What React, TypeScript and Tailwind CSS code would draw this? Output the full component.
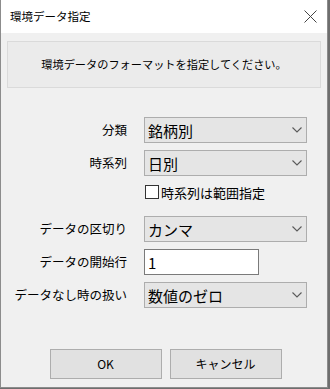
import React from "react";

const font = { fontFamily: '"Noto Sans CJK JP", "Noto Sans", sans-serif' };

function Chevron() {
  return (
    <svg width="10" height="6" viewBox="0 0 10 6" className="mr-[4px] shrink-0">
      <path d="M0.5 0.5 L5 5 L9.5 0.5" fill="none" stroke="#5a5a5a" strokeWidth="1.1" />
    </svg>
  );
}

function Select({ value }: { value: string }) {
  return (
    <div className="w-[163px] h-[26px] bg-[#e5e5e5] border border-[#adadad] flex items-center justify-between pl-[3px]">
      <span className="text-[15px] leading-none text-black">{value}</span>
      <Chevron />
    </div>
  );
}

function Row({ label, children, className = "" }: { label: string; children: React.ReactNode; className?: string }) {
  return (
    <div className={`flex items-center ${className}`}>
      <div className="w-[126px] text-right text-[12.5px] leading-none text-black whitespace-nowrap">{label}</div>
      <div className="ml-[17px]">{children}</div>
    </div>
  );
}

export default function App() {
  return (
    <div className="w-[330px] h-[389px] bg-[#6e6e6e]" style={font}>
      <div className="w-[328px] h-[388px] bg-[#f0f0f0] border-l border-r border-b border-[#8c8c8c] flex flex-col">
        {/* タイトルバー */}
        <div className="h-[33px] bg-white flex items-center justify-between pl-[9px] pr-[10px]">
          <span className="text-[11.5px] text-black">環境データ指定</span>
          <svg width="13" height="13" viewBox="0 0 13 13">
            <path d="M0.5 0.5 L12.5 12.5 M12.5 0.5 L0.5 12.5" stroke="#444" strokeWidth="1" />
          </svg>
        </div>

        <div className="px-[6px] pt-[8px]">
          <div className="h-[47px] border border-[#dadada] bg-[#ebebeb] flex items-center justify-center">
            <span className="text-[11.2px] text-black">環境データのフォーマットを指定してください。</span>
          </div>
        </div>

        <div className="mt-[29px] flex flex-col">
          <Row label="分類">
            <Select value="銘柄別" />
          </Row>
          <Row label="時系列" className="mt-[7px]">
            <Select value="日別" />
          </Row>
          <div className="mt-[9px] ml-[144px] flex items-center">
            <div className="w-[14px] h-[14px] bg-white border border-[#333]" />
            <span className="ml-[2px] text-[13px] leading-none text-black">時系列は範囲指定</span>
          </div>
          <Row label="データの区切り" className="mt-[17px]">
            <Select value="カンマ" />
          </Row>
          <Row label="データの開始行" className="mt-[7px]">
            <div className="w-[115px] h-[26px] bg-white border border-[#7a7a7a] flex items-center pl-[3px]">
              <span className="text-[15px] leading-none text-black">1</span>
            </div>
          </Row>
          <Row label="データなし時の扱い" className="mt-[7px]">
            <Select value="数値のゼロ" />
          </Row>
        </div>

        <div className="mt-[41px] flex justify-center gap-[8px] pl-[3px]">
          <button className="w-[112px] h-[30px] bg-[#e1e1e1] border border-[#adadad] text-[12px] text-black">OK</button>
          <button className="w-[112px] h-[30px] bg-[#e1e1e1] border border-[#adadad] text-[12px] text-black">キャンセル</button>
        </div>
      </div>
    </div>
  );
}
